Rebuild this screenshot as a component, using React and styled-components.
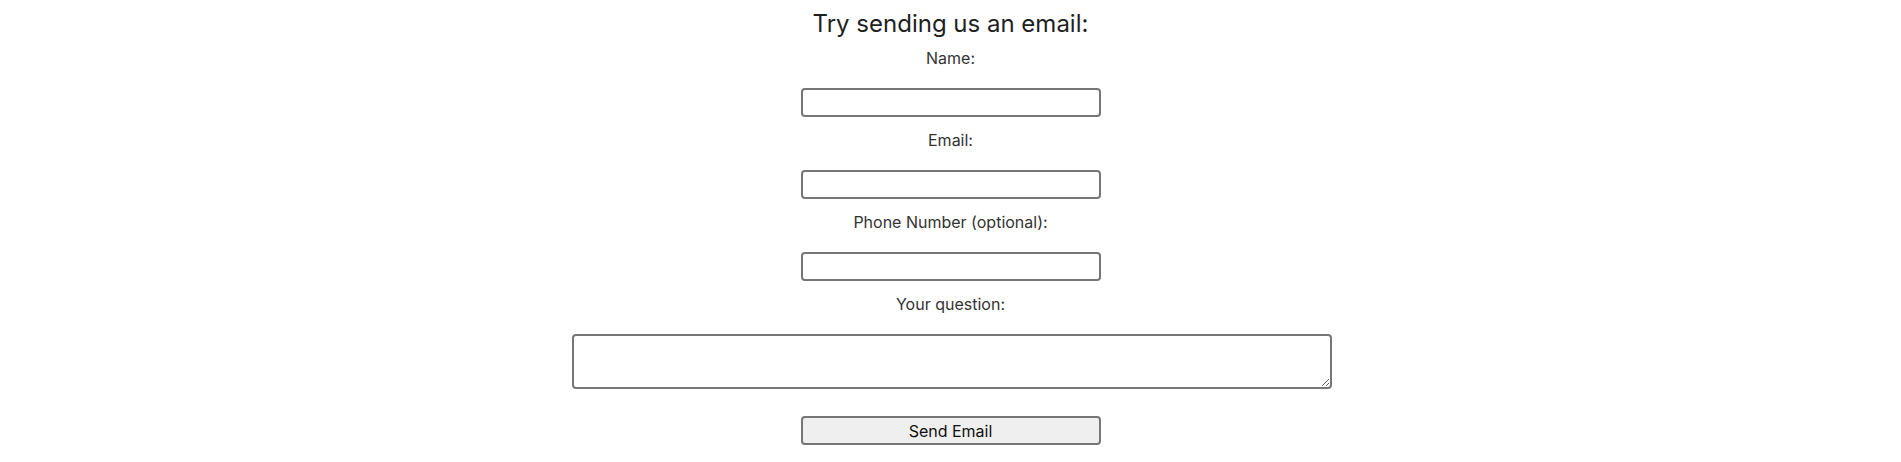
import React from "react";
import styled, { createGlobalStyle } from "styled-components";

const GlobalStyle = createGlobalStyle`
  body {
    margin: 0;
    background: #fff;
    font-family: Inter, "Noto Sans", sans-serif;
    color: #222;
  }
`;

const Page = styled.main`
  padding-top: 9px;
  display: flex;
  justify-content: center;
`;

const Form = styled.form`
  display: flex;
  flex-direction: column;
  align-items: center;
`;

const Title = styled.h2`
  margin: 0 0 10px;
  font-size: 24px;
  font-weight: 400;
  line-height: 29px;
  color: #1f1f1f;
`;

const Label = styled.label`
  display: block;
  font-size: 16px;
  line-height: 20px;
  margin: ${(p) => (p.$first ? "0" : "13px")} 0 20px;
  color: #333;
`;

const fieldBox = `
  box-sizing: border-box;
  border: 2px solid #767676;
  border-radius: 4px;
  background: #fff;
  font-family: Inter, "Noto Sans", sans-serif;
  font-size: 16px;
  padding: 2px 6px;
  outline: none;
`;

const Input = styled.input`
  ${fieldBox}
  width: 300px;
  height: 29px;
`;

const TextArea = styled.textarea`
  ${fieldBox}
  width: 760px;
  height: 55px;
  margin-left: 2px;
  resize: both;
`;

const SendButton = styled.button`
  box-sizing: border-box;
  margin-top: 27px;
  width: 300px;
  height: 29px;
  border: 2px solid #767676;
  border-radius: 4px;
  background: #efefef;
  color: #111;
  font-family: Inter, "Noto Sans", sans-serif;
  font-size: 16px;
  padding: 0;
`;

const fields = [
  { id: "name", label: "Name:", type: "text" },
  { id: "email", label: "Email:", type: "email" },
  { id: "phone", label: "Phone Number (optional):", type: "tel" },
];

export default function App() {
  return (
    <>
      <GlobalStyle />
      <Page>
        <Form onSubmit={(e) => e.preventDefault()}>
          <Title>Try sending us an email:</Title>
          {fields.map((f, i) => (
            <React.Fragment key={f.id}>
              <Label htmlFor={f.id} $first={i === 0}>
                {f.label}
              </Label>
              <Input id={f.id} type={f.type} />
            </React.Fragment>
          ))}
          <Label htmlFor="question">Your question:</Label>
          <TextArea id="question" />
          <SendButton type="submit">Send Email</SendButton>
        </Form>
      </Page>
    </>
  );
}
